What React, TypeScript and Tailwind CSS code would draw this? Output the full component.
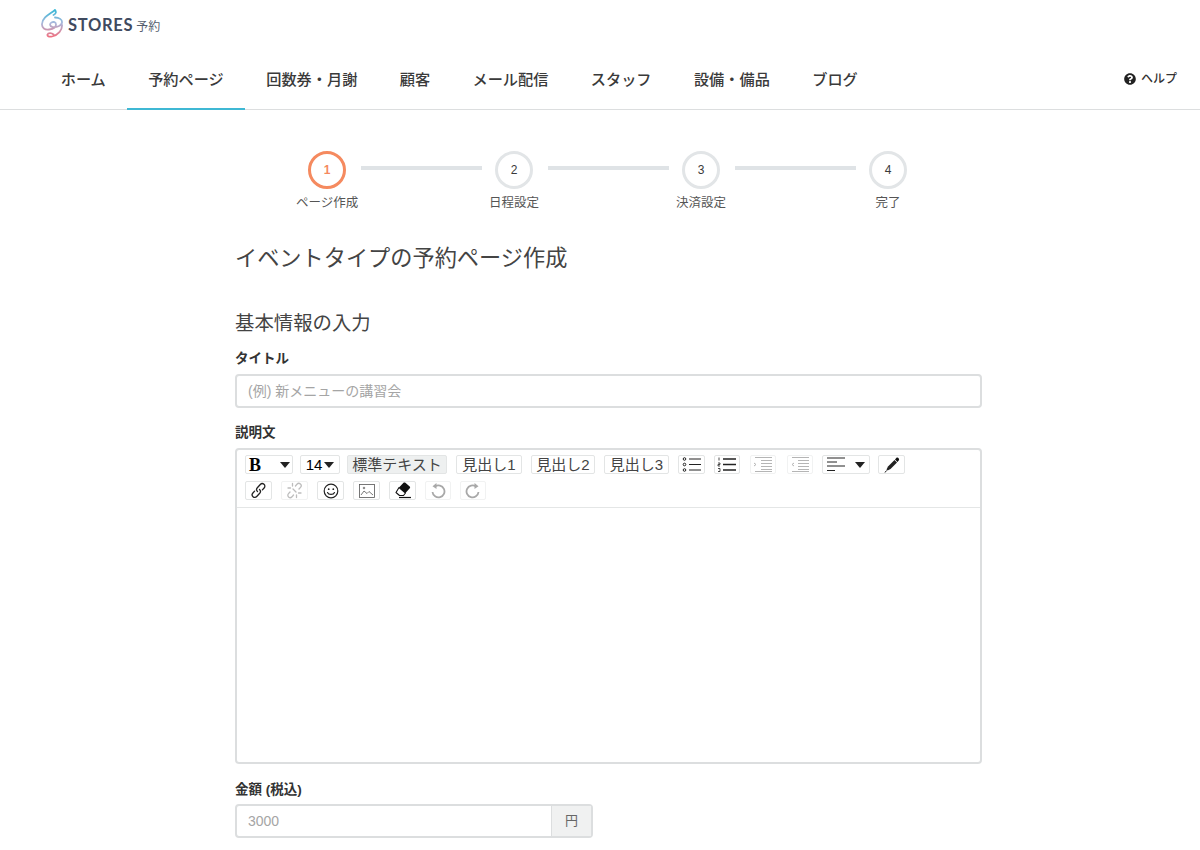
import { FaQuestionCircle } from "react-icons/fa";
import type { ReactNode } from "react";

const navItems = ["ホーム", "予約ページ", "回数券・月謝", "顧客", "メール配信", "スタッフ", "設備・備品", "ブログ"];

const steps = ["ページ作成", "日程設定", "決済設定", "完了"];

function Logo() {
  return (
    <svg width="24" height="30" viewBox="0 0 24 30" fill="none">
      <defs>
        <linearGradient id="swirl" x1="12" y1="0" x2="12" y2="28" gradientUnits="userSpaceOnUse">
          <stop offset="0" stopColor="#2fb8d6" />
          <stop offset="0.5" stopColor="#a9b8dc" />
          <stop offset="1" stopColor="#f0707f" />
        </linearGradient>
      </defs>
      <path
        d="M14 1C9 5 1.500 8 1 15c-.3 4 3 6 7 5.500 4-.5 7-2.500 7-5s-2.500-3-4.500-2c-2 1-2 4 1 4.500 4 .5 9-1 9.500-4.500.4-3-3-5-7-5M14 1c1.500 2 1 4-1.500 5M21 16c.5 5-4 10-10 11.500-3 .7-5-.5-4.500-2 .6-1.500 4-2 6 0"
        stroke="url(#swirl)"
        strokeWidth="1.800"
        strokeLinecap="round"
      />
    </svg>
  );
}

function Btn({ children, className = "justify-center" }: { children: ReactNode; className?: string }) {
  return (
    <div className={`h-[19px] flex items-center border border-[#e3e5e5] rounded-[2px] text-[15px] leading-none text-[#444] shrink-0 ${className}`}>
      {children}
    </div>
  );
}

function Caret() {
  return <span className="w-0 h-0 border-x-[5px] border-x-transparent border-t-[6px] border-t-[#222]" />;
}

function Lines({ faded = false, dots }: { faded?: boolean; dots: "ul" | "ol" | "in" | "out" | "align" }) {
  const color = faded ? "#b5b5b5" : "#222";
  return (
    <svg width="20" height="15" viewBox="0 0 20 15" fill="none" stroke={color} strokeWidth="1">
      {dots === "ul" && (
        <>
          <circle cx="2.500" cy="2" r="1.300" />
          <circle cx="2.500" cy="7.500" r="1.300" />
          <circle cx="2.500" cy="13" r="1.300" />
          <path d="M7 2h12M7 7.500h12M7 13h12" />
        </>
      )}
      {dots === "ol" && (
        <>
          <path d="M2 .5v3M1 6h2v1.500H1V9h2M1 11.500h2v3H1" strokeWidth="0.800" />
          <path d="M6 2h13M6 7.500h13M6 13h13" strokeWidth="1.400" />
        </>
      )}
      {dots === "in" && <path d="M2 .5h17M8 3.500h11M8 6.500h11M8 9.500h11M8 12.500h11M2 14.500h17M1 6l2 1.500L1 9" />}
      {dots === "out" && <path d="M2 .5h17M8 3.500h11M8 6.500h11M8 9.500h11M8 12.500h11M2 14.500h17M4 6L2 7.500 4 9" />}
      {dots === "align" && <path d="M0 1h18M0 5h10M0 9h18M0 13.500h8" />}
    </svg>
  );
}

function Pen() {
  return (
    <svg width="16" height="16" viewBox="0 0 16 16">
      <path d="M12.500 .8c.8-.5 1.900 0 2.400.9.400.8.200 1.500-.4 2L13.500 5 11 2.500z" fill="#111" />
      <path d="M10.500 3l2.500 2.500-6.500 6.500-3 1.500-1-1 1.500-3z" fill="#222" />
      <path d="M2.500 13.500L1 15.500" stroke="#111" strokeWidth="1" />
    </svg>
  );
}

function LinkIcon({ faded = false }: { faded?: boolean }) {
  const color = faded ? "#bdbdbd" : "#222";
  return (
    <svg width="17" height="17" viewBox="0 0 17 17" fill="none" stroke={color} strokeWidth="1.300" strokeLinecap="round">
      {faded ? (
        <>
          <path d="M9.500 4l1.500-1.800c1-1.100 2.400-1.100 3.400-.2s1 2.400.1 3.400L13 7" />
          <path d="M7.500 13l-1.500 1.800c-1 1.100-2.400 1.100-3.400.2s-1-2.400-.1-3.400L4 10" />
          <path d="M6.500 1.500v2.500M2 6h2.500M10.500 15.500V13M15 11h-2.500M7 7l3 3" />
        </>
      ) : (
        <>
          <path d="M7.500 9.500c-1.200-1.100-1.200-2.600-.2-3.700l3-3.300c1-1.100 2.600-1.200 3.700-.2s1.100 2.600.1 3.700l-1.700 1.900" />
          <path d="M9.500 7.500c1.200 1.100 1.200 2.600.2 3.700l-3 3.300c-1 1.100-2.600 1.200-3.700.2s-1.100-2.600-.1-3.700l1.700-1.900" />
        </>
      )}
    </svg>
  );
}

function Smile() {
  return (
    <svg width="16" height="16" viewBox="0 0 16 16" fill="none" stroke="#222" strokeWidth="1.200">
      <circle cx="8" cy="8" r="6.800" />
      <circle cx="5.700" cy="6.200" r="0.900" fill="#222" stroke="none" />
      <circle cx="10.300" cy="6.200" r="0.900" fill="#222" stroke="none" />
      <path d="M4.500 9.500c1 2.600 6 2.600 7 0" strokeLinecap="round" />
    </svg>
  );
}

function ImageIcon() {
  return (
    <svg width="16" height="14" viewBox="0 0 16 14" fill="none" stroke="#555" strokeWidth="0.800">
      <rect x="0.500" y="0.500" width="15" height="13" />
      <path d="M2 11l3-4 3 2.500 2-2 4 3.500" />
      <circle cx="5" cy="4" r="0.800" />
    </svg>
  );
}

function Eraser() {
  return (
    <svg width="19" height="17" viewBox="0 0 19 17">
      <path d="M10.500 .8c.6-.5 1.300-.5 1.900 0l4.300 3.600c.6.500.6 1.200.1 1.800L12.500 11 6 5.500z" fill="#111" />
      <path d="M6 5.500l6.500 5.500-2 2.500H6.500L3 10.500z" fill="#fff" stroke="#111" strokeWidth="1.100" strokeLinejoin="round" />
      <path d="M6 15.500h12" stroke="#111" strokeWidth="1.200" />
    </svg>
  );
}

function Turn({ flip = false }: { flip?: boolean }) {
  return (
    <svg width="16" height="16" viewBox="0 0 16 16" fill="none" className={flip ? "-scale-x-100" : ""}>
      <path d="M5 3.500A6 6 0 1 1 2.500 9" stroke="#a8a8a8" strokeWidth="1.800" />
      <path d="M6.500 0v6L2.500 3.200z" fill="#a8a8a8" />
    </svg>
  );
}

export default function App() {
  return (
    <div className="min-h-[850px] bg-white text-[#3a3a3a] font-['Liberation_Sans','Noto_Sans_CJK_JP',sans-serif]">
      <header className="h-[110px] border-b border-[#dcdedf] flex flex-col">
        <div className="h-[50px] pl-[41px] pt-[9px] flex items-start gap-[3px]">
          <Logo />
          <div className="flex items-baseline gap-[3px] mt-[7px]">
            <span className="font-['Lato',sans-serif] font-bold text-[16.500px] leading-[18px] tracking-[0.7px] text-[#3f4a5f]">STORES</span>
            <span className="text-[12px] leading-[18px] text-[#555e6e]">予約</span>
          </div>
        </div>
        <nav className="flex-1 flex items-stretch pl-[40px] pr-[23px]">
          {navItems.map((item) => (
            <a
              key={item}
              className={`px-[20.700px] mr-[1px] pt-[20px] text-[15.200px] leading-[20px] font-medium text-[#3a3a3a] border-b-2 -mb-px ${
                item === "予約ページ" ? "border-[#3fb8d4]" : "border-transparent"
              }`}
            >
              {item}
            </a>
          ))}
          <a className="ml-auto pt-[20px] flex items-start gap-[5px] text-[12px] leading-[18px] font-medium text-[#333]">
            <FaQuestionCircle size={12} className="mt-[3px] text-[#222]" />
            ヘルプ
          </a>
        </nav>
      </header>

      <main className="w-[747px] ml-[235px]">
        <div className="flex pl-[73px] pt-[41px]">
          {steps.map((label, i) => (
            <div key={label} className="flex">
              <div className="w-[38px] flex flex-col items-center">
                <div
                  className={`w-[38px] h-[38px] shrink-0 rounded-full border-[3px] flex items-center justify-center text-[12px] ${
                    i === 0 ? "border-[#f58a5f] text-[#f58a5f] font-bold" : "border-[#e2e5e7] text-[#3a3a3a]"
                  }`}
                >
                  {i + 1}
                </div>
                <span className="mt-[5px] text-[12.500px] leading-[18px] whitespace-nowrap text-[#555]">{label}</span>
              </div>
              {i < 3 && <div className="w-[121px] h-[4px] mt-[15px] ml-[15px] mr-[13px] bg-[#dfe3e6]" />}
            </div>
          ))}
        </div>

        <h1 className="mt-[31px] text-[22.200px] leading-[32px] font-normal text-[#444]">イベントタイプの予約ページ作成</h1>
        <h2 className="mt-[34px] text-[19.400px] leading-[28px] font-normal text-[#444]">基本情報の入力</h2>

        <label className="block mt-[12px] text-[13.500px] leading-[20px] font-bold text-[#333]">タイトル</label>
        <input
          placeholder="(例) 新メニューの講習会"
          className="block mt-[5px] w-full h-[34px] px-[11px] border-2 border-[#dcdedf] rounded-[4px] text-[14px] placeholder:text-[#a5a5a5] outline-none"
        />

        <label className="block mt-[15px] text-[13.500px] leading-[20px] font-bold text-[#333]">説明文</label>
        <div className="mt-[5px] h-[316px] border-2 border-[#dcdedf] rounded-[4px] flex flex-col">
          <div className="h-[58px] border-b border-[#e4e6e6] px-[8px] pt-[5px] flex flex-col gap-[7px]">
            <div className="flex gap-[9px]">
              <Btn className="w-[48px] justify-between pl-[3px] pr-[2px]">
                <span className="font-['Liberation_Serif',serif] font-bold text-[18px] text-black">B</span>
                <Caret />
              </Btn>
              <Btn className="w-[40px] justify-center gap-[2px] text-black -ml-[2px]">
                14
                <Caret />
              </Btn>
              <Btn className="w-[100px] justify-center bg-[#eef0f0] -ml-[2px]">標準テキスト</Btn>
              <Btn className="w-[66px] justify-center">見出し1</Btn>
              <Btn className="w-[64px] justify-center">見出し2</Btn>
              <Btn className="w-[65px] justify-center">見出し3</Btn>
              <Btn className="w-[27px] justify-center"><Lines dots="ul" /></Btn>
              <Btn className="w-[26px] justify-center"><Lines dots="ol" /></Btn>
              <Btn className="w-[26px] justify-center border-[#f1f2f2] ml-px"><Lines dots="in" faded /></Btn>
              <Btn className="w-[26px] justify-center border-[#f1f2f2] ml-[2px]"><Lines dots="out" faded /></Btn>
              <Btn className="w-[48px] justify-between pl-[4px] pr-[4px]">
                <Lines dots="align" />
                <Caret />
              </Btn>
              <Btn className="w-[27px] justify-center -ml-px"><Pen /></Btn>
            </div>
            <div className="flex gap-[9px]">
              <Btn className="w-[27px] justify-center"><LinkIcon /></Btn>
              <Btn className="w-[27px] justify-center border-[#f1f2f2]"><LinkIcon faded /></Btn>
              <Btn className="w-[27px] justify-center"><Smile /></Btn>
              <Btn className="w-[27px] justify-center"><ImageIcon /></Btn>
              <Btn className="w-[27px] justify-center"><Eraser /></Btn>
              <Btn className="w-[26px] justify-center border-[#f1f2f2]"><Turn /></Btn>
              <Btn className="w-[26px] justify-center border-[#f1f2f2]"><Turn flip /></Btn>
            </div>
          </div>
          <div className="flex-1" />
        </div>

        <label className="block mt-[16px] text-[13.500px] leading-[20px] font-bold text-[#333]">金額 (税込)</label>
        <div className="mt-[4px] w-[358px] h-[34px] flex border-2 border-[#dcdedf] rounded-[4px]">
          <input placeholder="3000" className="flex-1 min-w-0 px-[11px] text-[14px] placeholder:text-[#a5a5a5] outline-none" />
          <div className="w-[40px] bg-[#f0f1f1] border-l border-[#dcdedf] flex items-center justify-center text-[13px] text-[#666]">円</div>
        </div>
      </main>
    </div>
  );
}
